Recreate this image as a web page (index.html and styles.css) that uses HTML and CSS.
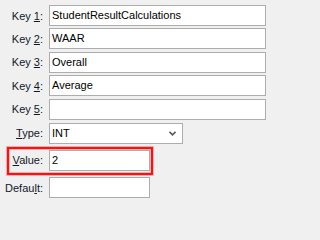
FILE: index.html
```html
<!DOCTYPE html>
<html>
<head>
<meta charset="utf-8">
<link rel="stylesheet" href="styles.css">
</head>
<body>
<div class="form">
  <div class="row"><label class="label">Key <u>1</u>:</label><div class="field wide">StudentResultCalculations</div></div>
  <div class="row"><label class="label">Key <u>2</u>:</label><div class="field wide">WAAR</div></div>
  <div class="row"><label class="label">Key <u>3</u>:</label><div class="field wide">Overall</div></div>
  <div class="row"><label class="label">Key <u>4</u>:</label><div class="field wide">Average</div></div>
  <div class="row"><label class="label">Key <u>5</u>:</label><div class="field wide"></div></div>
  <div class="row type-row"><label class="label"><u>T</u>ype:</label><div class="field select">INT<svg class="chev" width="7" height="5" viewBox="0 0 7 5"><path d="M0.5 0.8 L3.5 3.8 L6.5 0.8" fill="none" stroke="#5a5a5a" stroke-width="1.6"/></svg></div></div>
  <div class="row highlight"><label class="label"><u>V</u>alue:</label><div class="field short">2</div></div>
  <div class="row"><label class="label">Defau<u>l</u>t:</label><div class="field short"></div></div>
</div>
</body>
</html>
```
FILE: styles.css
```css
html, body {
  margin: 0;
  padding: 0;
  background: #f0f0f0;
}
body {
  width: 271px;
  height: 202px;
  overflow: hidden;
  font-family: "Liberation Sans", Arial, sans-serif;
  font-size: 11px;
  color: #000;
}
.form {
  display: flex;
  flex-direction: column;
  padding-top: 5px;
  gap: 2.4px;
}
.row {
  display: flex;
  align-items: center;
  gap: 6px;
  height: 21px;
}
.label {
  width: 43px;
  flex: none;
  text-align: right;
  white-space: nowrap;
  color: #101828;
}
.label u {
  text-decoration-thickness: 1px;
  text-underline-offset: 1px;
}
.field {
  box-sizing: border-box;
  height: 21px;
  border: 1px solid #adadad;
  background: #fff;
  padding: 0 2px;
  line-height: 19px;
  white-space: nowrap;
  overflow: hidden;
}
.wide { width: 217px; }
.short { width: 101px; }
.select {
  width: 134px;
  display: flex;
  align-items: center;
  justify-content: space-between;
  padding-right: 6px;
}
.chev { flex: none; }
.type-row { margin-top: 1px; }
.highlight {
  box-sizing: content-box;
  margin: 0.6px 0 0 7px;
  width: fit-content;
  border: 2px solid #ff1010;
  box-shadow: 0 0 0 1px rgba(255, 110, 110, 0.5), inset 0 0 0 1px rgba(255, 110, 110, 0.45);
  padding: 1px 1px 2px 0;
}
.highlight .label { width: 34px; }
```
